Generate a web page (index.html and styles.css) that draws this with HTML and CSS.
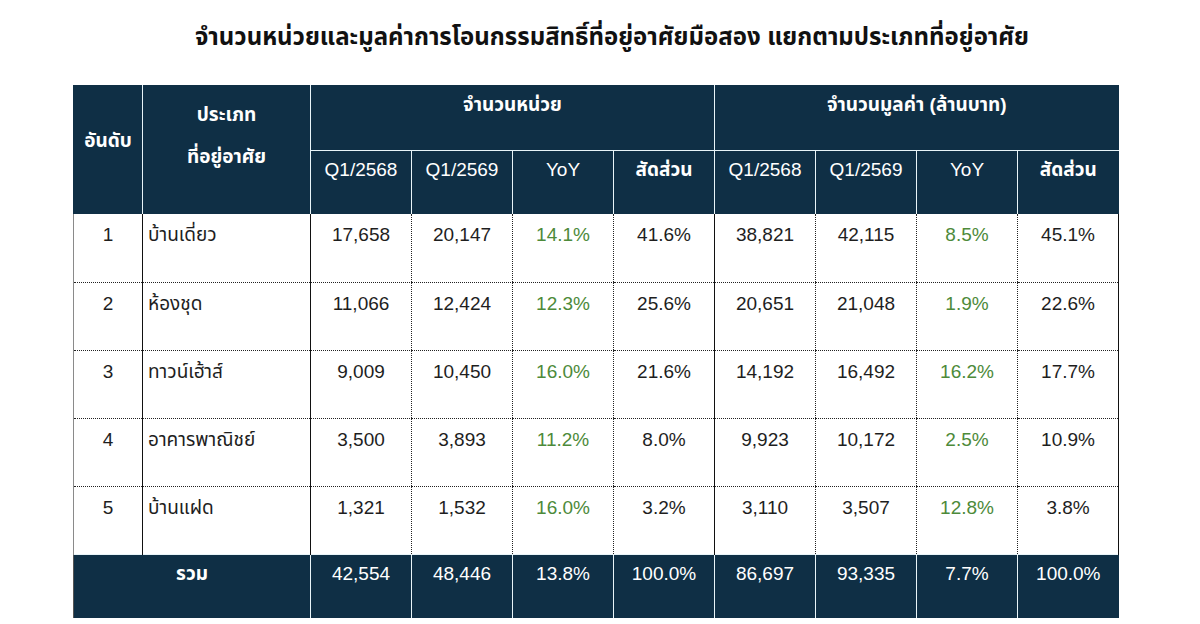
FILE: index.html
```html
<!DOCTYPE html>
<html lang="th">
<head>
<meta charset="utf-8">
<link rel="stylesheet" href="styles.css">
</head>
<body>
<h1 class="title">จำนวนหน่วยและมูลค่าการโอนกรรมสิทธิ์ที่อยู่อาศัยมือสอง แยกตามประเภทที่อยู่อาศัย</h1>
<table class="tbl">
  <colgroup>
    <col class="c-rank"><col class="c-type">
    <col class="c-num"><col class="c-num"><col class="c-num"><col class="c-num">
    <col class="c-num"><col class="c-num"><col class="c-num"><col class="c-num">
  </colgroup>
  <thead>
    <tr class="h1">
      <th rowspan="2" class="rank-h">อันดับ</th>
      <th rowspan="2" class="type-h"><div class="l1">ประเภท</div><div class="l2">ที่อยู่อาศัย</div></th>
      <th colspan="4" class="grp">จำนวนหน่วย</th>
      <th colspan="4" class="grp">จำนวนมูลค่า (ล้านบาท)</th>
    </tr>
    <tr class="h2">
      <th class="sub">Q1/2568</th><th class="sub">Q1/2569</th><th class="sub">YoY</th><th class="sub th">สัดส่วน</th>
      <th class="sub">Q1/2568</th><th class="sub">Q1/2569</th><th class="sub">YoY</th><th class="sub th">สัดส่วน</th>
    </tr>
  </thead>
  <tbody>
    <tr>
      <td class="rank">1</td><td class="type">บ้านเดี่ยว</td>
      <td class="n sep">17,658</td><td class="n">20,147</td><td class="n g">14.1%</td><td class="n">41.6%</td>
      <td class="n sep">38,821</td><td class="n">42,115</td><td class="n g">8.5%</td><td class="n last">45.1%</td>
    </tr>
    <tr>
      <td class="rank">2</td><td class="type">ห้องชุด</td>
      <td class="n sep">11,066</td><td class="n">12,424</td><td class="n g">12.3%</td><td class="n">25.6%</td>
      <td class="n sep">20,651</td><td class="n">21,048</td><td class="n g">1.9%</td><td class="n last">22.6%</td>
    </tr>
    <tr>
      <td class="rank">3</td><td class="type">ทาวน์เฮ้าส์</td>
      <td class="n sep">9,009</td><td class="n">10,450</td><td class="n g">16.0%</td><td class="n">21.6%</td>
      <td class="n sep">14,192</td><td class="n">16,492</td><td class="n g">16.2%</td><td class="n last">17.7%</td>
    </tr>
    <tr>
      <td class="rank">4</td><td class="type">อาคารพาณิชย์</td>
      <td class="n sep">3,500</td><td class="n">3,893</td><td class="n g">11.2%</td><td class="n">8.0%</td>
      <td class="n sep">9,923</td><td class="n">10,172</td><td class="n g">2.5%</td><td class="n last">10.9%</td>
    </tr>
    <tr>
      <td class="rank">5</td><td class="type">บ้านแฝด</td>
      <td class="n sep">1,321</td><td class="n">1,532</td><td class="n g">16.0%</td><td class="n">3.2%</td>
      <td class="n sep">3,110</td><td class="n">3,507</td><td class="n g">12.8%</td><td class="n last">3.8%</td>
    </tr>
  </tbody>
  <tfoot>
    <tr class="total">
      <td colspan="2" class="tot-label">รวม</td>
      <td>42,554</td><td>48,446</td><td>13.8%</td><td>100.0%</td>
      <td>86,697</td><td>93,335</td><td>7.7%</td><td>100.0%</td>
    </tr>
  </tfoot>
</table>
</body>
</html>
```

FILE: styles.css
```css
html, body {
  margin: 0;
  padding: 0;
  background: #ffffff;
}

body {
  width: 1200px;
  height: 624px;
  overflow: hidden;
  font-family: "Liberation Sans", "Noto Sans Thai", "Noto Sans", "DejaVu Sans", sans-serif;
  color: #1e1e1e;
}

.title {
  margin: 0;
  padding: 22px 0 0 24px;
  height: 85px;
  box-sizing: border-box;
  text-align: center;
  font-size: 24px;
  line-height: 30px;
  font-weight: bold;
  color: #111;
}

.tbl {
  margin-left: 73px;
  border-collapse: collapse;
  table-layout: fixed;
  width: 1045px;
}

.c-rank { width: 69px; }
.c-type { width: 168px; }
.c-num { width: 101px; }

thead th {
  background: #0f2f45;
  color: #ffffff;
  padding: 0;
  vertical-align: top;
  font-size: 19px;
  line-height: 22px;
}

.h1 { height: 65px; }
.h2 { height: 64px; }

.rank-h {
  font-weight: bold;
  padding-top: 45px;
  border-left: 1px solid #0f2f45;
}

.type-h {
  font-weight: bold;
  border-left: 1px solid #e8f4f8;
  border-right: 1px solid #e8f4f8;
}

.type-h .l1 { padding-top: 19px; }
.type-h .l2 { padding-top: 20px; }

.grp {
  font-weight: bold;
  padding-top: 9px;
  border-left: 1px solid #e8f4f8;
  border-bottom: 1px solid #e8f4f8;
}

.sub {
  font-weight: normal;
  padding-top: 8px;
  border-left: 1px solid #e8f4f8;
}

.sub.th { font-weight: bold; }

tbody tr { height: 68px; }

tbody td {
  font-size: 19px;
  line-height: 22px;
  padding: 10px 0 0 0;
  vertical-align: top;
  border-top: 1px dotted #222;
  border-bottom: 1px dotted #222;
  border-left: 1px dotted #222;
}

tbody tr:first-child td { border-top: none; }

tbody td.rank {
  text-align: center;
  border-left: 1px solid #8a8a8a;
}

tbody td.type {
  text-align: left;
  padding-left: 5px;
  border-left: 1px solid #111;
}

tbody td.n {
  text-align: center;
}

tbody td.sep {
  border-left: 1px solid #111;
}

tbody td.last {
  border-right: 1px solid #111;
}

tbody td.g {
  color: #4d8a3a;
}

.total { height: 64px; }

.total td {
  background: #0f2f45;
  color: #ffffff;
  font-size: 19px;
  line-height: 22px;
  padding: 8px 0 0 0;
  vertical-align: top;
  text-align: center;
  border-left: 1px solid #e8f4f8;
  border-top: 1px solid #e8f4f8;
}

.total td.tot-label {
  font-weight: bold;
  border-left: 1px solid #555;
}
```
